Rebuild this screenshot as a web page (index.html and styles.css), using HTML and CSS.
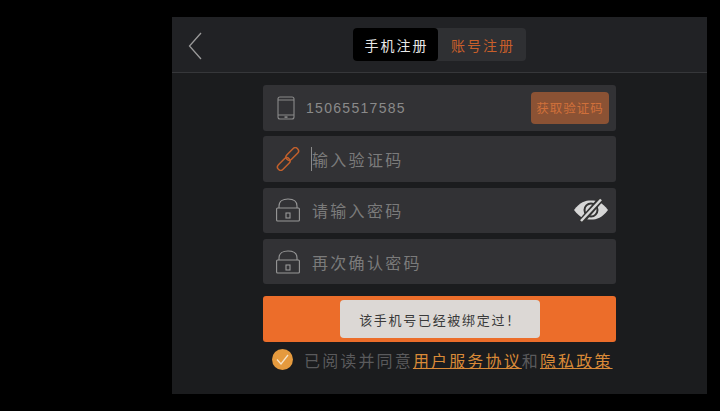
FILE: index.html
```html
<!DOCTYPE html>
<html lang="zh">
<head>
<meta charset="utf-8">
<title>手机注册</title>
<link rel="stylesheet" href="styles.css">
</head>
<body>
<main class="panel">
  <header class="top">
    <svg class="back" width="14" height="28" viewBox="0 0 14 28"><path d="M13 1 1.500 14 13 27" fill="none" stroke="#9a9a9a" stroke-width="1.300"/></svg>
    <div class="tabs">
      <span class="tab active">手机注册</span>
      <span class="tab">账号注册</span>
    </div>
  </header>
  <section class="form">
    <div class="row">
      <svg class="icon phone" width="18" height="24" viewBox="0 0 18 24"><rect x="1" y="1" width="16" height="22" rx="2" fill="none" stroke="#8a8a8a" stroke-width="1.100"/><path d="M1 4h16M1 19h16" stroke="#8a8a8a" stroke-width="1"/><rect x="7.500" y="20.300" width="3" height="1.600" fill="#8a8a8a"/></svg>
      <span class="number">15065517585</span>
      <button class="code">获取验证码</button>
    </div>
    <div class="row">
      <svg class="icon" width="24" height="24" viewBox="0 0 24 24"><g fill="none" stroke="#c2602c" stroke-width="1.500"><rect x="13" y="-0.500" width="6.500" height="15" rx="3.250" transform="rotate(45 16.250 7)"/><rect x="4.500" y="9.500" width="6.500" height="15" rx="3.250" transform="rotate(45 7.750 17)"/></g></svg>
      <span class="hint caret">输入验证码</span>
    </div>
    <div class="row">
      <svg class="icon" width="24" height="24" viewBox="0 0 24 24"><use href="#lock"/></svg>
      <span class="hint">请输入密码</span>
      <svg class="eye" width="36" height="24" viewBox="0 0 36 24"><path d="M1 12C7 4 12 2.500 18 2.500S29 4 35 12c-6 8-11 9.500-17 9.500S7 20 1 12Z" fill="#d6d6d6"/><circle cx="18" cy="12" r="6.500" fill="none" stroke="#323232" stroke-width="2"/><path d="M8 24 28 1" stroke="#323232" stroke-width="6"/><path d="M8 23 28 1.500" stroke="#d6d6d6" stroke-width="2.500"/></svg>
    </div>
    <div class="row">
      <svg class="icon" width="24" height="24" viewBox="0 0 24 24"><use href="#lock"/></svg>
      <span class="hint">再次确认密码</span>
    </div>
    <button class="submit" aria-label="注册"></button>
    <div class="toast">该手机号已经被绑定过！</div>
    <p class="agree">
      <svg class="check" width="21" height="21" viewBox="0 0 21 21"><circle cx="10.500" cy="10.500" r="10.500" fill="#e59a3e"/><path d="M5 10.500 9 15l7-9" fill="none" stroke="#f6e3c8" stroke-width="1.300"/></svg>
      <span>已阅读并同意<a>用户服务协议</a>和<a>隐私政策</a></span>
    </p>
  </section>
  <svg class="defs" width="0" height="0"><defs><g id="lock" fill="none" stroke="#989898" stroke-width="1.100"><rect x="0.600" y="10" width="22.800" height="13" rx="1"/><path d="M3 10V8C3 3 7 1 12 1s9 2 9 7v2"/><rect x="10" y="15" width="4" height="5"/></g></defs></svg>
</main>
</body>
</html>
```
FILE: styles.css
```css
* { box-sizing: border-box; }
html, body { margin: 0; height: 100%; background: #000; overflow: hidden; }
body { padding: 17px 13px 17px 172px; font-family: "Noto Sans CJK SC", "Liberation Sans", sans-serif; }
.panel { height: 377px; background: #1b1c1e; display: flex; flex-direction: column; }
.top { height: 56px; flex: none; position: relative; display: flex; justify-content: center; align-items: center; background: #212225; border-bottom: 1px solid #36373a; }
.back { position: absolute; left: 15.500px; top: 15px; }
.tabs { display: flex; width: 173px; height: 33px; background: #2f3033; border-radius: 4px; }
.tab { flex: 1; display: flex; align-items: center; justify-content: center; padding-left: 2px; font-size: 14px; letter-spacing: 2px; color: #c95f2a; border-radius: 4px; }
.tab.active { flex: none; width: 85px; background: #000; color: #e8e8e8; }
.form { width: 353px; margin: 12px auto 0 91px; position: relative; display: flex; flex-direction: column; }
.row { height: 45.500px; margin-bottom: 5.800px; background: #323235; border-radius: 3px; display: flex; align-items: center; padding-left: 13px; color: #7b7b7b; }
.icon { flex: none; }
.phone { margin-left: 1px; }
.number { margin-left: 11px; font-size: 14px; letter-spacing: 1.300px; font-family: "Liberation Sans", sans-serif; color: #8a8a8a; }
.hint { margin-left: 12px; font-size: 16px; letter-spacing: 2.300px; line-height: 24px; }
.caret { border-left: 1px solid #8a8a8a; margin-left: 11px; }
.code { margin-left: auto; margin-right: 7px; width: 78px; height: 32px; padding: 0; border: 0; border-radius: 4px; background: #8b5234; color: #d0703a; font: inherit; font-size: 12.500px; letter-spacing: 1px; }
.eye { margin-left: auto; margin-right: 7px; }
.submit { height: 46px; margin-top: 5.800px; border: 0; border-radius: 3px; background: #ec6d2a; color: transparent; font: inherit; }
.toast { position: absolute; left: 77px; top: 215px; width: 200px; height: 38px; display: flex; align-items: center; justify-content: center; border-radius: 4px; background: #dcd8d5; color: #3a3a3a; font-size: 13px; letter-spacing: 1.700px; }
.agree { margin: 6px 0 0 9px; display: flex; align-items: center; gap: 11px; font-size: 16px; letter-spacing: 2.150px; color: #5a5a5c; }
.agree a { color: #d98a38; text-decoration: underline; }
.check { flex: none; }
.defs { position: absolute; }
```
